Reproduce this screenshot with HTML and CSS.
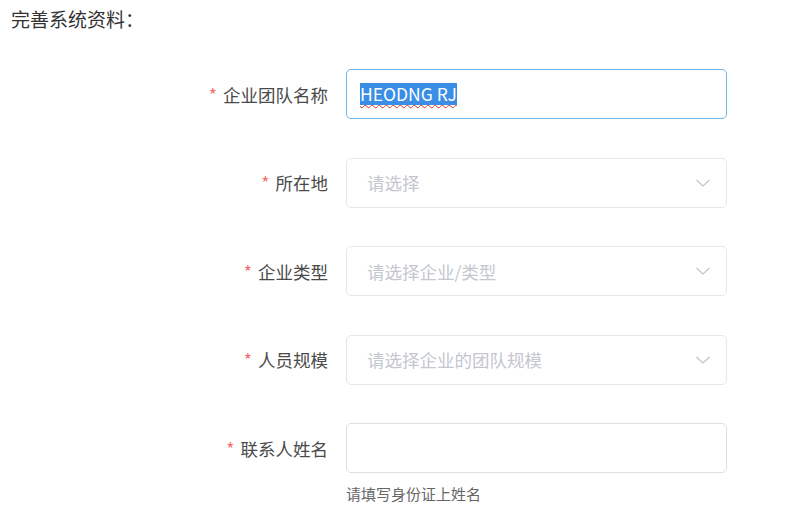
FILE: index.html
```html
<!DOCTYPE html>
<html>
<head>
  <title>完善系统资料</title>
  <link rel="stylesheet" href="styles.css">
</head>
<body>
  <div class="page">
    <h1 class="title">完善系统资料：</h1>

    <div class="form">
      <div class="form-row">
        <label class="label"><span class="star">*</span>企业团队名称</label>
        <div class="field field-active">
          <span class="selected">HEODNG RJ</span>
        </div>
      </div>

      <div class="form-row">
        <label class="label"><span class="star">*</span>所在地</label>
        <div class="field field-select">
          <span class="placeholder">请选择</span>
          <svg class="arrow" width="16" height="14" viewBox="0 0 16 14"><polyline points="1.5,4 8,10 14.5,4" fill="none" stroke="#c0c4cc" stroke-width="1.2"/></svg>
        </div>
      </div>

      <div class="form-row">
        <label class="label"><span class="star">*</span>企业类型</label>
        <div class="field field-select">
          <span class="placeholder">请选择企业/类型</span>
          <svg class="arrow" width="16" height="14" viewBox="0 0 16 14"><polyline points="1.5,4 8,10 14.5,4" fill="none" stroke="#c0c4cc" stroke-width="1.2"/></svg>
        </div>
      </div>

      <div class="form-row">
        <label class="label"><span class="star">*</span>人员规模</label>
        <div class="field field-select">
          <span class="placeholder">请选择企业的团队规模</span>
          <svg class="arrow" width="16" height="14" viewBox="0 0 16 14"><polyline points="1.5,4 8,10 14.5,4" fill="none" stroke="#c0c4cc" stroke-width="1.2"/></svg>
        </div>
      </div>

      <div class="form-row last">
        <label class="label"><span class="star">*</span>联系人姓名</label>
        <div class="field"></div>
      </div>
      <p class="hint">请填写身份证上姓名</p>
    </div>
  </div>
</body>
</html>
```

FILE: styles.css
```css
body {
  margin: 0;
  font-family: "Noto Sans CJK SC", "Noto Sans", sans-serif;
  background-color: #ffffff;
  color: #333333;
}

.page {
  width: 792px;
}

.title {
  margin: 0;
  padding: 6px 0 0 11px;
  font-size: 19px;
  line-height: 26px;
  font-weight: normal;
  color: #333333;
}

.form {
  margin-top: 37px;
}

.form-row {
  display: flex;
  align-items: center;
  margin-bottom: 38.5px;
}

.form-row.last {
  margin-bottom: 0;
}

.label {
  width: 346px;
  box-sizing: border-box;
  padding-right: 18px;
  text-align: right;
  font-size: 17.5px;
  color: #4a4a4a;
}

.star {
  color: #f56c6c;
  margin-right: 6px;
}

.field {
  width: 381px;
  height: 50px;
  box-sizing: border-box;
  border: 1px solid #dcdfe6;
  border-radius: 5px;
  display: flex;
  align-items: center;
  padding: 0 20px;
  font-size: 17.5px;
}

.field-active {
  border-color: #6bb6e6;
  padding-left: 13px;
}

.selected {
  background-color: #3a8ee6;
  color: #ffffff;
  line-height: 22px;
  text-decoration-line: underline;
  text-decoration-style: wavy;
  text-decoration-color: #d9342b;
  text-decoration-thickness: 1px;
  text-underline-offset: 3px;
}

.field-select {
  justify-content: space-between;
  border-color: #e4e7ed;
}

.placeholder {
  color: #c4c7ce;
}

.arrow {
  margin-right: -5px;
}

.hint {
  margin: 11px 0 0 346px;
  font-size: 15px;
  line-height: 20px;
  color: #666666;
}
```
